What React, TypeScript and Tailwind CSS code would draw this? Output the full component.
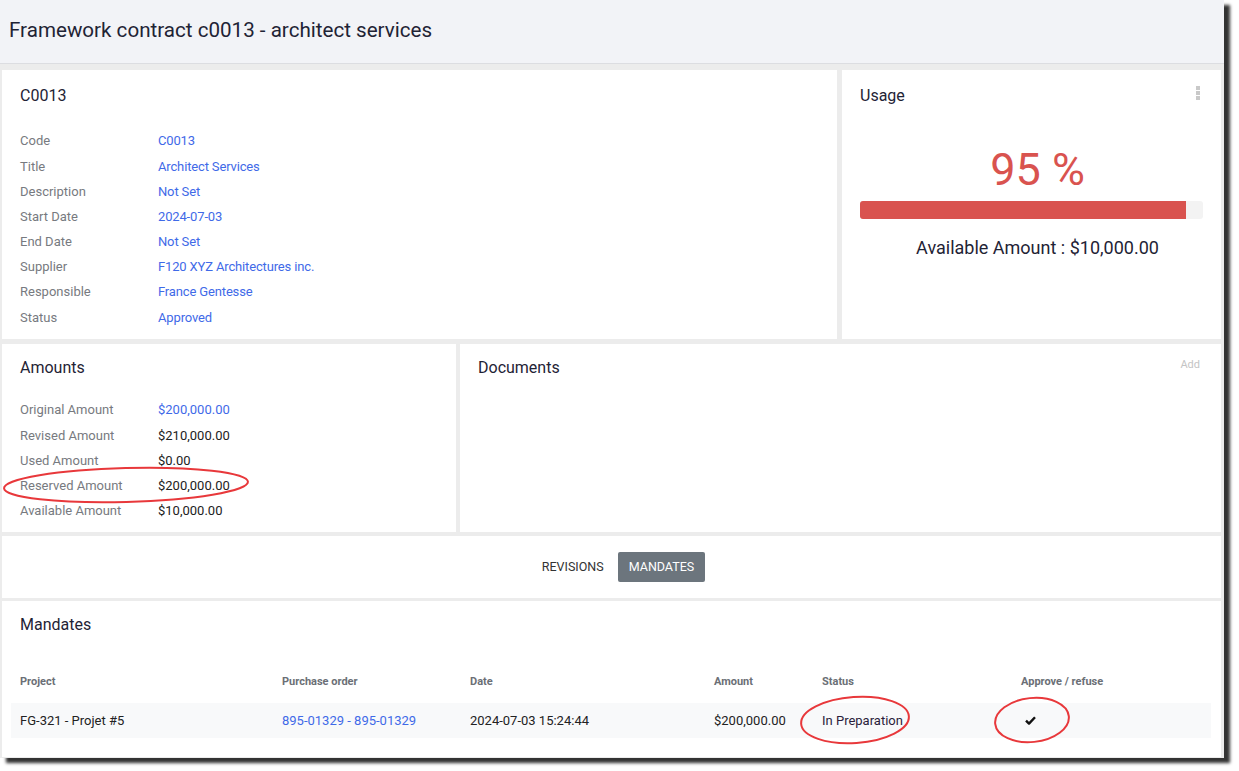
import React from "react";

const details = [
  { label: "Code", value: "C0013" },
  { label: "Title", value: "Architect Services" },
  { label: "Description", value: "Not Set" },
  { label: "Start Date", value: "2024-07-03" },
  { label: "End Date", value: "Not Set" },
  { label: "Supplier", value: "F120 XYZ Architectures inc." },
  { label: "Responsible", value: "France Gentesse" },
  { label: "Status", value: "Approved" },
];

const amounts = [
  { label: "Original Amount", value: "$200,000.00", link: true },
  { label: "Revised Amount", value: "$210,000.00" },
  { label: "Used Amount", value: "$0.00" },
  { label: "Reserved Amount", value: "$200,000.00" },
  { label: "Available Amount", value: "$10,000.00" },
];

const usage = 95;

export default function App() {
  return (
    <div className="relative w-[1239px] h-[771px] bg-white font-['Roboto',sans-serif] text-[#1f2335]">
      <div className="w-[1224px] h-[758px] bg-[#ececec] flex flex-col shadow-[6px_5px_3px_rgba(0,0,0,0.8)]">
        {/* header */}
        <div className="h-[64px] bg-[#f2f3f7] border-b border-[#dcdde1] flex items-center pl-[9px] pb-[4px]">
          <h1 className="text-[20.6px] leading-[24px]">Framework contract c0013 - architect services</h1>
        </div>

        <div className="flex flex-col pl-[2px] pr-[3px] pt-[6px]">
          {/* row 1 */}
          <div className="flex gap-[5px] h-[269px]">
            <div className="w-[835px] bg-white pt-[16px] px-[18px]">
              <div className="text-[16px] leading-[19px]">C0013</div>
              <div className="mt-[23.5px]">
                {details.map((d) => (
                  <div key={d.label} className="flex items-center h-[25.2px] text-[13px]">
                    <span className="w-[138px] text-[#777a80]">{d.label}</span>
                    <span className="text-[#3f6ae8] tracking-[-0.15px]">{d.value}</span>
                  </div>
                ))}
              </div>
            </div>
            <div className="relative flex-1 bg-white pt-[16px] px-[18px]">
              <div className="text-[16px] leading-[19px]">Usage</div>
              <div className="absolute top-[16px] right-[21px] flex flex-col gap-[1px]">
                <span className="w-[4px] h-[4px] bg-[#c9c9c9]" />
                <span className="w-[4px] h-[4px] bg-[#c9c9c9]" />
                <span className="w-[4px] h-[4px] bg-[#c9c9c9]" />
              </div>
              <div className="mt-[39px] pl-[12px] text-center text-[45px] leading-[52px] text-[#d9534f]">95 %</div>
              <div className="mt-[5px] h-[18px] rounded-[3px] bg-[#f3f3f3] overflow-hidden">
                <div className="h-full bg-[#d9534f]" style={{ width: `${usage}%` }} />
              </div>
              <div className="mt-[18px] pl-[12px] text-center text-[18px] leading-[22px]">Available Amount : $10,000.00</div>
            </div>
          </div>

          {/* row 2 */}
          <div className="flex gap-[4px] h-[188px] mt-[5px]">
            <div className="w-[454px] bg-white pt-[14px] px-[18px]">
              <div className="text-[16px] leading-[19px]">Amounts</div>
              <div className="mt-[20.5px]">
                {amounts.map((a) => (
                  <div key={a.label} className="flex items-center h-[25.2px] text-[13px]">
                    <span className="w-[138px] text-[#777a80]">{a.label}</span>
                    <span className={a.link ? "text-[#3f6ae8]" : "text-[#222]"}>{a.value}</span>
                  </div>
                ))}
              </div>
            </div>
            <div className="relative flex-1 bg-white pt-[14px] px-[18px]">
              <div className="text-[16px] leading-[19px]">Documents</div>
              <span className="absolute top-[13px] right-[21px] text-[11px] text-[#c4c4c4]">Add</span>
            </div>
          </div>

          {/* tabs */}
          <div className="h-[62px] bg-white mt-[4px] flex items-center justify-center pl-[12px] gap-[2px]">
            <button className="h-[30px] px-[12px] text-[12.5px] text-[#333] uppercase">Revisions</button>
            <button className="h-[30px] px-[11px] text-[12.5px] uppercase text-white bg-[#6c757d] rounded-[2px]">Mandates</button>
          </div>

          {/* mandates */}
          <div className="h-[156px] bg-white mt-[3px] pt-[14px]">
            <div className="px-[18px] text-[16px] leading-[19px]">Mandates</div>
            <div className="mx-[9px] mt-[36px] mr-[10px]">
              <div className="grid grid-cols-[271px_188px_244px_108px_199px_1fr] h-[24px] items-center text-[11px] font-bold text-[#6b6f76]">
                <span className="pl-[9px]">Project</span>
                <span>Purchase order</span>
                <span>Date</span>
                <span>Amount</span>
                <span>Status</span>
                <span>Approve / refuse</span>
              </div>
              <div className="grid grid-cols-[271px_188px_244px_108px_199px_1fr] h-[35px] mt-[9px] items-center bg-[#f8f9fa] text-[13px] text-[#222]">
                <span className="pl-[9px]">FG-321 - Projet #5</span>
                <span className="text-[#3f6ae8]">895-01329 - 895-01329</span>
                <span>2024-07-03 15:24:44</span>
                <span>$200,000.00</span>
                <span className="text-[#2a1d3a]">In Preparation</span>
                <span className="pl-[4px]">
                  <svg width="11" height="9" viewBox="0 0 11 9">
                    <path d="M1 4.6 L4 7.6 L10 1.2" fill="none" stroke="#111" strokeWidth="2.4" strokeLinejoin="round" />
                  </svg>
                </span>
              </div>
            </div>
          </div>
        </div>
      </div>

      {/* annotation marks */}
      <svg className="absolute inset-0 pointer-events-none" width="1239" height="771" viewBox="0 0 1239 771">
        <ellipse cx="126" cy="485" rx="122" ry="17" fill="none" stroke="#e8383b" strokeWidth="2" transform="rotate(-1.5 126 485)" />
        <ellipse cx="855" cy="720" rx="54" ry="23" fill="none" stroke="#e8383b" strokeWidth="2" transform="rotate(-4 855 720)" />
        <ellipse cx="1032" cy="720" rx="37" ry="22" fill="none" stroke="#e8383b" strokeWidth="2" transform="rotate(-6 1032 720)" />
      </svg>
    </div>
  );
}
